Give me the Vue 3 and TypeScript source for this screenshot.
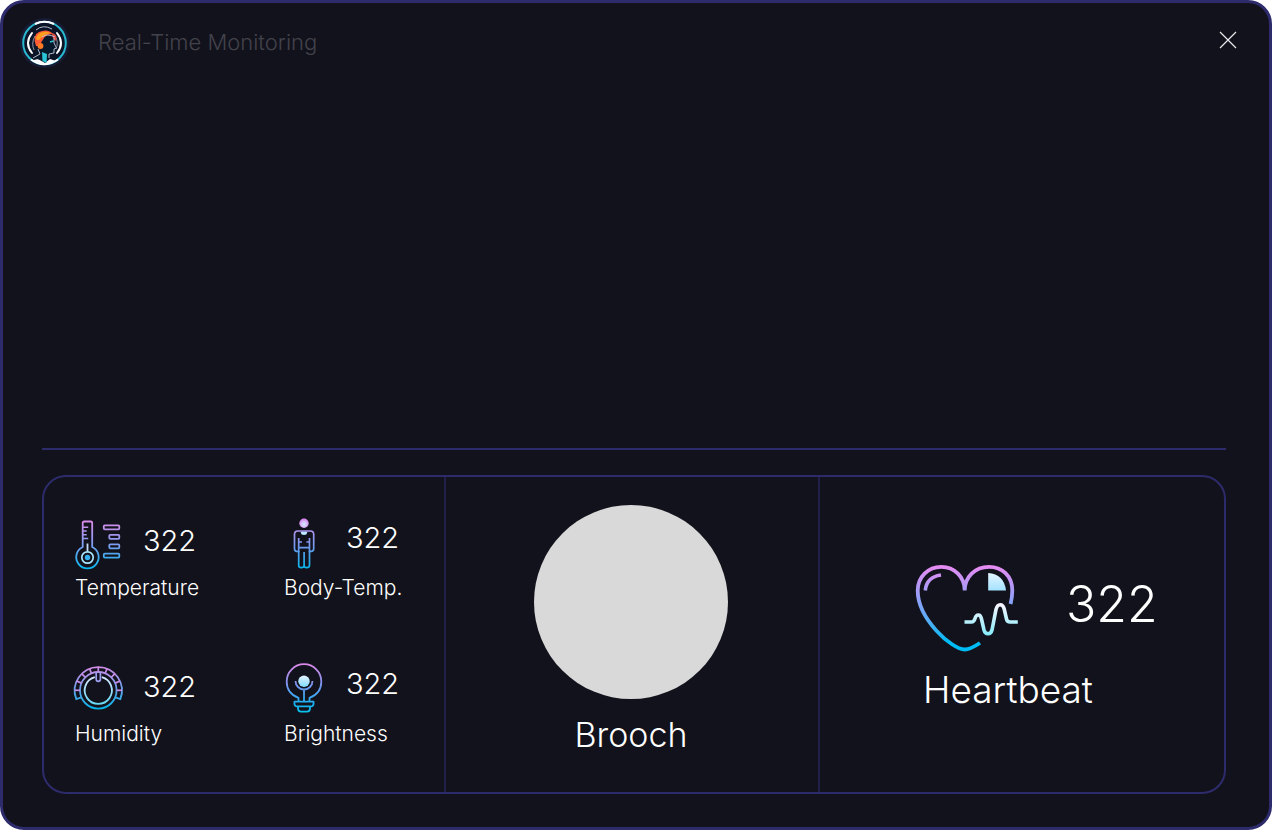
<script setup lang="ts">
import { ref } from 'vue'

type IconName = 'temperature' | 'humidity' | 'body' | 'brightness'

interface Metric {
  icon: IconName
  label: string
  value: number
}

const open = ref(true)

const columns: { name: string; metrics: Metric[] }[] = [
  {
    name: 'ambient',
    metrics: [
      { icon: 'temperature', label: 'Temperature', value: 322 },
      { icon: 'humidity', label: 'Humidity', value: 322 },
    ],
  },
  {
    name: 'personal',
    metrics: [
      { icon: 'body', label: 'Body-Temp.', value: 322 },
      { icon: 'brightness', label: 'Brightness', value: 322 },
    ],
  },
]

const heartbeat = 322

// Radial separators of the humidity dial, in degrees from straight up
const dialTicks = [-90, -67, -45, -22, 0, 22, 45, 67, 90]
</script>

<template>
  <main v-if="open" class="window">
    <header class="header">
      <svg class="avatar" viewBox="0 0 54 54" aria-hidden="true">
        <circle cx="26.500" cy="27" r="25" fill="#171b33" />
        <circle cx="26.500" cy="27" r="21.300" fill="#0c1528" stroke="#29b9cf" stroke-width="2" />
        <path d="M17 8A21.300 21.300 0 0 1 36 8M13 43.500Q26 53 40 43.500" fill="none" stroke="#fff" stroke-width="2" />
        <path d="M14 44.500L20 43L27 47L32 43L38 45Q27 51 14 44.500Z" fill="#fff" />
        <path d="M14 17Q6 27 14 37" fill="none" stroke="#fff" stroke-width="2" stroke-linecap="round" />
        <path d="M39 17Q47 27 39 37" fill="none" stroke="#fff" stroke-width="2" stroke-linecap="round" />
        <path d="M17 20Q13 27 16 34M37 20Q41 26 38 33" fill="none" stroke="#e8edf2" stroke-width="0.600" />
        <path d="M22 30L23 38Q19 41 16 42L26 45L31 42V38L37 37V33L39 31L36 28L36 22L27 20Z" fill="#07182b" />
        <path d="M18 30Q14 19 21 16Q30 12 35 18Q29 18 26 22L21 30Z" fill="#ff5a36" />
        <path d="M18 22Q22 13 33 17Q26 18 22 23Q19 26 18 22Z" fill="#ff9d1c" />
        <path d="M34 17Q40 18 38 25Q34 23 34 17Z" fill="#e04a45" />
        <circle cx="22.500" cy="30" r="2.900" fill="#ff7a24" />
        <path d="M24 36L29 38L28.500 47L24.500 45Z" fill="#2ac4d6" />
        <path d="M32 26L35.500 25" stroke="#2ac4d6" stroke-width="1.500" />
        <path d="M18 14Q25 8 34 13M36 22V27L38.500 32L36 33V37L31 38V42M20 33L22 38L15 42M24 21Q29 17 37 21" fill="none" stroke="#c3ccd8" stroke-width="0.900" />
      </svg>
      <h1 class="title">Real-Time Monitoring</h1>
      <button class="close" type="button" aria-label="Close" @click="open = false">
        <svg viewBox="0 0 18 18" aria-hidden="true">
          <path d="M1 1L17 17M17 1L1 17" fill="none" stroke="#f0f0f2" stroke-width="1.100" />
        </svg>
      </button>
    </header>

    <section class="stage" aria-label="Live view"></section>
    <hr class="rule" />

    <section class="panel">
      <div class="cell metrics">
        <div v-for="column in columns" :key="column.name" class="column" :class="column.name">
          <div v-for="metric in column.metrics" :key="metric.icon" class="metric">
            <div class="reading">
              <svg v-if="metric.icon === 'temperature'" class="icon" viewBox="0 0 52 52" aria-hidden="true">
                <defs>
                  <linearGradient id="temperature-line" gradientUnits="userSpaceOnUse" x1="0" y1="2" x2="0" y2="51">
                    <stop offset="0" stop-color="#df8bea" /><stop offset="0.5" stop-color="#7e9df0" /><stop offset="1" stop-color="#08b7ef" />
                  </linearGradient>
                </defs>
                <g fill="none" stroke="url(#temperature-line)" stroke-width="1.800">
                  <path d="M9.700 29V5Q9.700 3.500 11.200 3.500H17.700Q19.200 3.500 19.200 5V29A11.200 11.200 0 1 1 9.700 29Z" />
                  <path d="M10 9.200H15.200M10 13H13.700M10 16.800H13.700M10 20.600H15.200" stroke-width="1.500" />
                  <rect x="30.800" y="7.300" width="15.500" height="4" rx="1" />
                  <rect x="36.300" y="16.800" width="10" height="4" rx="1" />
                  <rect x="36.300" y="26.300" width="10" height="4" rx="1" />
                  <rect x="30.800" y="35.600" width="15.500" height="4" rx="1" />
                </g>
                <path d="M14.500 25.500V33.800" stroke="#c6dcfb" stroke-width="1.800" />
                <circle cx="14.500" cy="39.500" r="5.700" fill="none" stroke="#a8e4fb" stroke-width="1.700" />
                <circle cx="14.500" cy="39.500" r="2.700" fill="#35b1f2" />
              </svg>

              <svg v-else-if="metric.icon === 'humidity'" class="icon" viewBox="0 0 52 52" aria-hidden="true">
                <defs>
                  <linearGradient id="humidity-line" gradientUnits="userSpaceOnUse" x1="0" y1="2" x2="0" y2="45">
                    <stop offset="0" stop-color="#d78ae8" /><stop offset="0.500" stop-color="#6d9ee8" /><stop offset="1" stop-color="#05b5ea" />
                  </linearGradient>
                  <linearGradient id="humidity-knob" gradientUnits="userSpaceOnUse" x1="0" y1="11" x2="0" y2="40">
                    <stop offset="0" stop-color="#e0e9ff" /><stop offset="1" stop-color="#67d8f5" />
                  </linearGradient>
                </defs>
                <g fill="none" stroke="url(#humidity-line)" stroke-width="1.800">
                  <circle cx="25.300" cy="26.300" r="18.300" />
                  <path d="M8.300 33.400L3.300 35.200A23.600 23.600 0 1 1 47.300 35.200L42.300 33.400" />
                  <g stroke-width="1.700">
                    <path v-for="angle in dialTicks" :key="angle" d="M25.300 2.700V8" :transform="`rotate(${angle} 25.300 26.300)`" />
                  </g>
                </g>
                <path d="M21.800 13.200A13.600 13.600 0 1 0 28.800 13.200" fill="none" stroke="url(#humidity-knob)" stroke-width="1.800" />
                <path d="M23.200 8V15.300Q23.200 17.300 25.300 17.300T27.400 15.300V8" fill="none" stroke="#9c9ff0" stroke-width="1.700" />
              </svg>

              <svg v-else-if="metric.icon === 'body'" class="icon" viewBox="0 0 52 52" aria-hidden="true">
                <defs>
                  <linearGradient id="body-line" gradientUnits="userSpaceOnUse" x1="0" y1="10" x2="0" y2="51">
                    <stop offset="0" stop-color="#b994ee" /><stop offset="0.450" stop-color="#7099ed" /><stop offset="1" stop-color="#05b8ec" />
                  </linearGradient>
                  <radialGradient id="body-head" cx="0.500" cy="0.600" r="0.500">
                    <stop offset="0" stop-color="#d6e8ff" /><stop offset="0.500" stop-color="#d2c7fa" /><stop offset="1" stop-color="#d98cf0" />
                  </radialGradient>
                </defs>
                <circle cx="26" cy="5.300" r="4.700" fill="url(#body-head)" />
                <path d="M22.700 13.500H29.300Q29.300 17 26 17T22.700 13.500Z" fill="#b9e8ff" />
                <g fill="none" stroke="url(#body-line)" stroke-width="1.700" stroke-linejoin="round">
                  <path d="M22.800 13H19.800Q16.500 13 16.500 16.500V31Q16.500 33.500 20 33.500H20.700V20M29.300 13H32.300Q35.700 13 35.700 16.500V31Q35.700 33.500 32 33.500H31.500V20M22.800 13H29.300" />
                  <path d="M20.700 29.700H31.500M20.700 33V47.500Q20.700 49.700 23.300 49.700T26.100 47.500V34M26.100 47.500Q26.100 49.700 28.700 49.700T31.500 47.500V33M20.700 24H24M31.500 24H28.400" />
                </g>
              </svg>

              <svg v-else class="icon" viewBox="0 0 52 52" aria-hidden="true">
                <defs>
                  <linearGradient id="bulb-line" gradientUnits="userSpaceOnUse" x1="0" y1="0" x2="0" y2="49">
                    <stop offset="0" stop-color="#dc88e8" /><stop offset="0.400" stop-color="#7d93ea" /><stop offset="0.800" stop-color="#1daef0" /><stop offset="1" stop-color="#08c2ee" />
                  </linearGradient>
                  <linearGradient id="bulb-core" x1="0" y1="0" x2="0" y2="1">
                    <stop offset="0" stop-color="#e5f2ff" /><stop offset="1" stop-color="#7edcff" />
                  </linearGradient>
                </defs>
                <g fill="none" stroke="url(#bulb-line)" stroke-width="1.800" stroke-linejoin="round">
                  <path d="M20.500 37.500V33.800Q8.700 29.500 8.700 17.500A17.300 17.300 0 0 1 43.300 17.500Q43.300 29.500 31.500 33.800V37.500M17.500 17A8.500 8.500 0 0 0 34.500 17M26 26V37.500" />
                  <path d="M16.500 37.700H35.500Q36 42.300 33.500 42.300H18.500Q16 42.300 16.500 37.700Z" />
                  <path d="M20 42.500V44Q20 47.700 23 47.700H29Q32 47.700 32 44V42.500" />
                </g>
                <circle cx="26" cy="17.300" r="5.700" fill="url(#bulb-core)" />
              </svg>

              <span class="value">{{ metric.value }}</span>
            </div>
            <span class="label">{{ metric.label }}</span>
          </div>
        </div>
      </div>

      <div class="cell brooch">
        <div class="disc"></div>
        <span class="large-label">Brooch</span>
      </div>

      <div class="cell heartbeat">
        <div class="pulse-reading">
          <svg class="heart" viewBox="0 0 108 92" aria-hidden="true">
            <defs>
              <linearGradient id="heart-line" gradientUnits="userSpaceOnUse" x1="0" y1="2" x2="0" y2="88">
                <stop offset="0" stop-color="#e98af1" /><stop offset="0.330" stop-color="#a09df8" /><stop offset="0.650" stop-color="#55acf5" /><stop offset="0.900" stop-color="#00bcf5" />
              </linearGradient>
              <linearGradient id="heart-pulse" gradientUnits="userSpaceOnUse" x1="0" y1="40" x2="0" y2="73">
                <stop offset="0" stop-color="#fbf5ff" /><stop offset="1" stop-color="#83ecfa" />
              </linearGradient>
              <linearGradient id="heart-light" x1="0" y1="0" x2="0" y2="1">
                <stop offset="0" stop-color="#e2f4ff" /><stop offset="1" stop-color="#a4e2ff" />
              </linearGradient>
            </defs>
            <g fill="none" stroke="url(#heart-line)" stroke-width="3.800">
              <path d="M96.600 41Q98.300 34 98.300 27.500C98.300 13 88 3.800 75 3.800C61 3.800 50.700 14 50.700 27.500C50.700 14 40.500 3.800 27.300 3.800C14 3.800 3.700 14 3.700 27.500C3.700 56 38 86.500 50.700 86.500Q56 86.500 66 80" />
              <path d="M11.300 27.500Q12.500 14 27 12" stroke-width="3.600" />
            </g>
            <path d="M74.200 10Q90 11 92 27.500H74.200Z" fill="url(#heart-light)" />
            <path d="M50.500 59H57.500Q60 59 61 55.500Q62 52 64.300 52T67.500 56L70 67Q71 70.800 74 70.800T78 67L82 46.500Q83.200 41.700 86.200 41.700T90.200 46L92.500 56Q93.200 59 96 59H103.800" fill="none" stroke="url(#heart-pulse)" stroke-width="3.600" />
          </svg>
          <span class="large-value">{{ heartbeat }}</span>
        </div>
        <span class="large-label">Heartbeat</span>
      </div>
    </section>
  </main>
</template>

<style>
body {
  margin: 0;
  background: #fff;
}
</style>

<style scoped>
.window {
  box-sizing: border-box;
  display: flex;
  flex-direction: column;
  min-height: 100vh;
  padding: 13px 43px 33px 39px;
  border: 3px solid #2d2b6b;
  border-radius: 24px;
  background: #12121c;
  color: #fff;
  font-family: Inter, "Liberation Sans", sans-serif;
  font-weight: 300;
}

.header {
  display: flex;
  align-items: center;
  margin: 0 -26px 0 -24px;
}

.avatar {
  width: 54px;
  height: 54px;
}

.title {
  flex: 1;
  margin: 0 0 2px 26px;
  color: #42424b;
  font-size: 22px;
  font-weight: 300;
  line-height: 32px;
}

.close {
  display: grid;
  place-items: center;
  width: 48px;
  height: 48px;
  margin-bottom: 6px;
  padding: 0;
  border: 0;
  background: none;
  cursor: pointer;
}

.close svg {
  width: 18px;
  height: 18px;
}

.stage {
  flex: 1;
}

.rule {
  width: 100%;
  height: 2px;
  margin: 0 0 25px;
  border: 0;
  background: #2d2b6b;
}

.panel {
  display: grid;
  grid-template-columns: 400fr 374fr 406fr;
  box-sizing: border-box;
  min-height: 319px;
  border: 2px solid #2d2b6b;
  border-radius: 24px;
}

.cell + .cell {
  border-left: 2px solid #20204a;
}

.metrics {
  display: grid;
  grid-template-columns: 209px 1fr;
  padding: 41px 0 0 31px;
}

.column {
  display: flex;
  flex-direction: column;
  gap: 58px;
}

.metric {
  display: flex;
  flex-direction: column;
}

.reading {
  display: flex;
  align-items: flex-start;
  gap: 18px;
  margin-left: -2px;
}

.icon {
  overflow: visible;
  width: 52px;
  height: 52px;
}

.personal .reading {
  gap: 16px;
  margin-left: -6px;
}

.value {
  font-size: 29px;
  line-height: 40px;
}

.ambient .value {
  line-height: 46px;
}

.label {
  font-size: 21px;
  line-height: 36px;
}

.brooch,
.heartbeat {
  display: flex;
  flex-direction: column;
  align-items: center;
}

.brooch {
  padding: 28px 2px 0 0;
}

.disc {
  width: 194px;
  height: 194px;
  border-radius: 50%;
  background: #d9d9d9;
}

.large-label {
  font-size: 36px;
  line-height: 48px;
}

.brooch .large-label {
  margin-top: 12px;
  font-size: 34px;
}

.heartbeat {
  align-items: flex-start;
  padding: 86px 0 0 94px;
}

.pulse-reading {
  display: flex;
  align-items: flex-start;
  gap: 44px;
}

.heart {
  width: 108px;
  height: 92px;
}

.large-value {
  font-size: 50px;
  line-height: 82px;
}

.heartbeat .large-label {
  margin: 11px 0 0 9px;
  font-size: 37px;
}
</style>
